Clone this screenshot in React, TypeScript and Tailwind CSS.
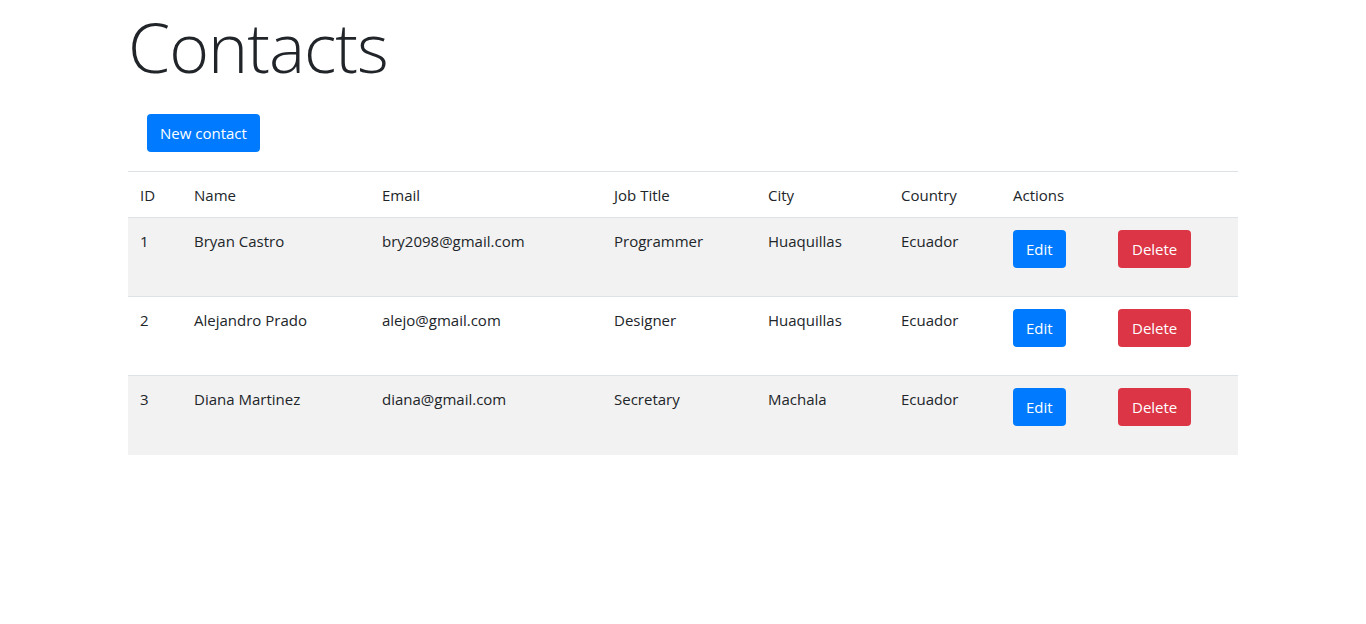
import React from "react";

const rows = [
  { id: 1, name: "Bryan Castro", email: "bry2098@gmail.com", job: "Programmer", city: "Huaquillas", country: "Ecuador" },
  { id: 2, name: "Alejandro Prado", email: "alejo@gmail.com", job: "Designer", city: "Huaquillas", country: "Ecuador" },
  { id: 3, name: "Diana Martinez", email: "diana@gmail.com", job: "Secretary", city: "Machala", country: "Ecuador" },
];

export default function App() {
  return (
    <div className="min-h-screen bg-white text-[#212529]" style={{ fontFamily: '"Open Sans", "Noto Sans", sans-serif' }}>
      <div className="w-[1110px] mx-auto">
        <h1 className="text-[68px] font-light leading-[88px] pt-[3px] m-0 tracking-[-1px]">Contacts</h1>
        <div className="mt-[23px] pl-[19px]">
          <button className="h-[38px] px-[13px] bg-[#007bff] text-white text-[15px] rounded-[4px]">New contact</button>
        </div>
        <table className="mt-[19px] w-[1110px] table-fixed border-collapse text-[15px]">
          <colgroup>
            <col className="w-[54px]" />
            <col className="w-[188px]" />
            <col className="w-[232px]" />
            <col className="w-[154px]" />
            <col className="w-[133px]" />
            <col className="w-[112px]" />
            <col className="w-[105px]" />
            <col className="w-[132px]" />
          </colgroup>
          <thead>
            <tr className="border-t border-b border-[#dee2e6] h-[46px]">
              {["ID", "Name", "Email", "Job Title", "City", "Country", "Actions", ""].map((h, i) => (
                <th key={i} className="px-[12px] pt-[2px] text-left font-normal align-middle">{h}</th>
              ))}
            </tr>
          </thead>
          <tbody>
            {rows.map((r, i) => (
              <tr key={r.id} className={(i % 2 === 0 ? "bg-[#f2f2f2]" : "bg-white") + " border-b border-[#dee2e6] last:border-b-0"}>
                <td className="px-[12px] pt-[11px] align-top leading-[24px] h-[79px]">{r.id}</td>
                <td className="px-[12px] pt-[11px] align-top leading-[24px]">{r.name}</td>
                <td className="px-[12px] pt-[11px] align-top leading-[24px]">{r.email}</td>
                <td className="px-[12px] pt-[11px] align-top leading-[24px]">{r.job}</td>
                <td className="px-[12px] pt-[11px] align-top leading-[24px]">{r.city}</td>
                <td className="px-[12px] pt-[11px] align-top leading-[24px]">{r.country}</td>
                <td className="px-[12px] pt-[12px] align-top">
                  <button className="h-[38px] px-[13px] bg-[#007bff] text-white text-[15px] rounded-[4px]">Edit</button>
                </td>
                <td className="px-[12px] pt-[12px] align-top">
                  <button className="h-[38px] px-[14px] bg-[#dc3545] text-white text-[15px] rounded-[4px]">Delete</button>
                </td>
              </tr>
            ))}
          </tbody>
        </table>
      </div>
    </div>
  );
}
